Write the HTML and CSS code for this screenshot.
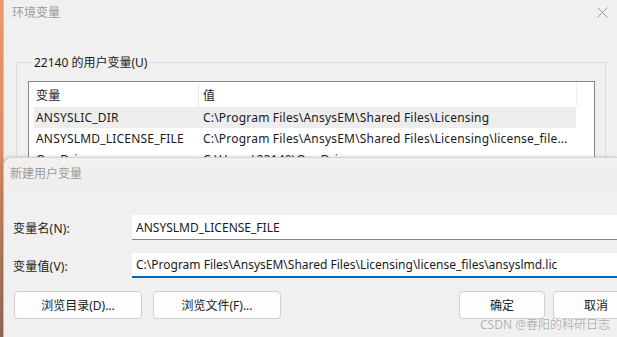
FILE: index.html
```html
<!DOCTYPE html>
<html lang="zh-CN">
  <head>
    <meta charset="UTF-8" />
    <meta name="viewport" content="width=device-width, initial-scale=1.0" />
    <title>环境变量</title>
    <link rel="stylesheet" href="styles.css">
  </head>
  <body>
    <div class="env-window">
      <div class="title-bar">
        <span>环境变量</span>
        <svg class="close" width="11" height="11" viewBox="0 0 11 11">
          <path d="M0.5 0.5 L10.5 10.5 M10.5 0.5 L0.5 10.5" stroke="#9a9a9a" stroke-width="1" fill="none" />
        </svg>
      </div>

      <fieldset class="group">
        <legend>22140 的用户变量(U)</legend>
        <div class="list">
          <div class="list-head">
            <div class="col-name">变量</div>
            <div class="col-value">值</div>
          </div>
          <div class="list-row selected">
            <div class="col-name">ANSYSLIC_DIR</div>
            <div class="col-value">C:\Program Files\AnsysEM\Shared Files\Licensing</div>
          </div>
          <div class="list-row">
            <div class="col-name">ANSYSLMD_LICENSE_FILE</div>
            <div class="col-value">C:\Program Files\AnsysEM\Shared Files\Licensing\license_file...</div>
          </div>
          <div class="list-row">
            <div class="col-name">OneDrive</div>
            <div class="col-value">C:\Users\22140\OneDrive</div>
          </div>
        </div>
      </fieldset>
    </div>

    <div class="dialog">
      <div class="dialog-title">新建用户变量</div>
      <div class="dialog-body">
        <div class="field">
          <label for="varName">变量名(N):</label>
          <input id="varName" class="text-input" type="text" value="ANSYSLMD_LICENSE_FILE" />
        </div>
        <div class="field">
          <label for="varValue">变量值(V):</label>
          <input id="varValue" class="text-input focused" type="text" value="C:\Program Files\AnsysEM\Shared Files\Licensing\license_files\ansyslmd.lic" />
        </div>
        <div class="buttons">
          <button class="btn btn-wide">浏览目录(D)...</button>
          <button class="btn btn-wide">浏览文件(F)...</button>
          <span class="spacer"></span>
          <button class="btn">确定</button>
          <button class="btn">取消</button>
        </div>
      </div>
    </div>

    <div class="watermark">CSDN @春阳的科研日志</div>
  </body>
</html>
```

FILE: styles.css
```css
body {
  margin: 0;
  width: 617px;
  height: 337px;
  overflow: hidden;
  position: relative;
  font-family: "Noto Sans", "Noto Sans CJK SC", sans-serif;
  font-size: 12px;
  color: #1a1a1a;
  background: linear-gradient(to bottom, #e89a6c 0, #d98c66 45%, #8d6a58 100%);
}
.env-window {
  margin-left: 3px;
  height: 337px;
  background-color: #f0f0f0;
  border-left: 1px solid #c9c4c0;
}
.title-bar {
  height: 24px;
  display: flex;
  align-items: center;
  justify-content: space-between;
  padding: 0 9px 0 8px;
  color: #9a9a9a;
}
.group {
  margin: 29px 0 0 12px;
  width: 577px;
  height: 200px;
  padding: 0 0 0 11px;
  border: 1px solid #dcdcdc;
  box-sizing: content-box;
}
.group legend {
  padding: 0 2px;
  margin-left: 4px;
  color: #1a1a1a;
}
.list {
  margin-top: 10px;
  width: 567px;
  height: 120px;
  border: 1px solid #828790;
  background-color: #fff;
  padding-left: 5px;
  box-sizing: border-box;
  letter-spacing: 0.2px;
}
.list-head,
.list-row {
  display: flex;
  width: 542px;
  align-items: center;
}
.list-head {
  height: 24px;
  padding-top: 1px;
  border-right: 1px solid #f0f0f0;
}
.list-row {
  height: 21px;
}
.list-row.selected {
  background-color: #ededed;
}
.col-name {
  width: 162px;
  flex-shrink: 0;
  padding-left: 2px;
  white-space: nowrap;
}
.col-value {
  padding-left: 5px;
  white-space: nowrap;
  overflow: hidden;
}
.list-head .col-name {
  align-self: stretch;
  display: flex;
  align-items: center;
  border-right: 1px solid #e5e5e5;
}
.list-head .col-value {
  padding-left: 4px;
}
.dialog {
  position: absolute;
  left: 3px;
  right: 0;
  top: 157px;
  bottom: 0;
  overflow: hidden;
  background-color: #f0f0f0;
  border-top: 1px solid #d6d2ce;
  border-left: 1px solid #c4beb9;
  border-radius: 8px 0 0 0;
  box-shadow: -1px -1px 3px rgba(0, 0, 0, 0.12);
}
.dialog-title {
  height: 29px;
  display: flex;
  align-items: center;
  padding-left: 6px;
  color: #9a9a9a;
  border-radius: 8px 0 0 0;
  background: linear-gradient(to bottom, #f3f1ef, #efeeec);
}
.dialog-body {
  padding: 28px 0 0 9px;
}
.field {
  display: flex;
  align-items: center;
  margin-bottom: 13px;
}
.field label {
  width: 119px;
  flex-shrink: 0;
  letter-spacing: 0.2px;
}
.text-input {
  width: 520px;
  flex-shrink: 0;
  height: 25px;
  box-sizing: border-box;
  border: none;
  border-bottom: 1px solid #868686;
  background-color: #fff;
  padding: 0 4px;
  font-family: inherit;
  font-size: 12px;
  color: #1a1a1a;
  outline: none;
}
.text-input.focused {
  border-bottom: 2px solid #0067c0;
}
.buttons {
  display: flex;
  margin-top: 11px;
  padding-left: 1px;
}
.btn {
  width: 86px;
  height: 28px;
  flex-shrink: 0;
  margin-right: 8px;
  border: 1px solid #d0d0d0;
  border-radius: 4px;
  background-color: #fdfdfd;
  font-family: inherit;
  font-size: 12px;
  color: #1a1a1a;
  padding: 0;
}
.btn-wide {
  width: 128px;
  margin-right: 11px;
}
.spacer {
  width: 167px;
  flex-shrink: 0;
}
.watermark {
  position: absolute;
  right: 7px;
  top: 318px;
  font-size: 12px;
  line-height: 14px;
  white-space: nowrap;
  color: rgba(160, 160, 160, 0.8);
  text-shadow: 0 0 1px #fff;
}
```
